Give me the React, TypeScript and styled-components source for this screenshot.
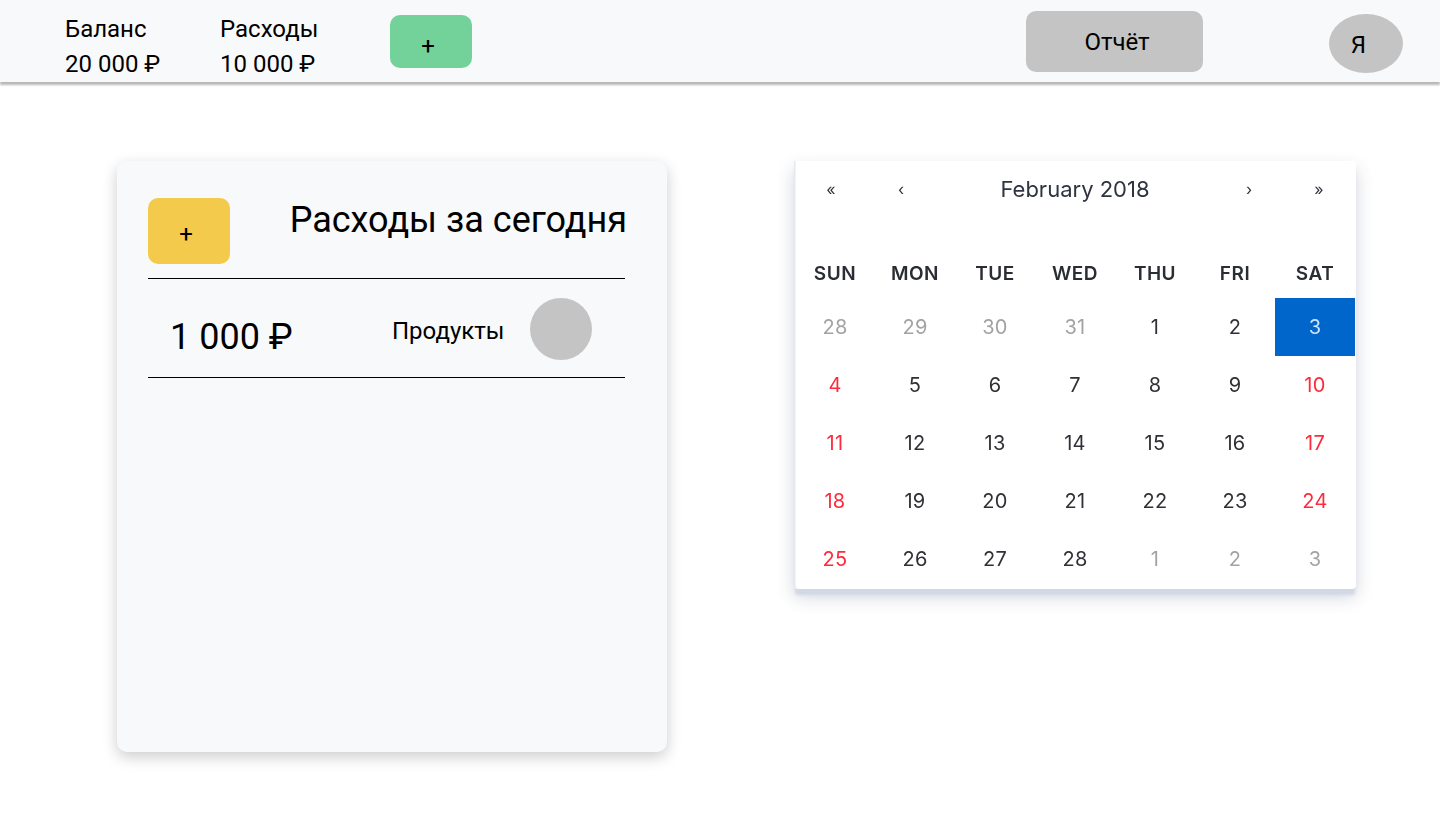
import React from 'react';
import styled, { createGlobalStyle } from 'styled-components';

const GlobalStyle = createGlobalStyle`
    html, body {
        margin: 0;
        padding: 0;
        background: #ffffff;
        font-family: Roboto, "Liberation Sans", sans-serif;
        color: #000000;
    }

    #root {
        min-height: 815px;
    }
`

type DayType = {
    value: number
    kind: 'normal' | 'muted' | 'weekend' | 'active'
}

const weekDays = ['SUN', 'MON', 'TUE', 'WED', 'THU', 'FRI', 'SAT']

const toDays = (values: number[]): DayType[] => values.map((value, i) => {
    const outside = (i < 4 && value > 20) || (i > 27 && value < 10)
    if (outside) return { value, kind: 'muted' }
    if (value === 3) return { value, kind: 'active' }
    if (i % 7 === 0 || i % 7 === 6) return { value, kind: 'weekend' }
    return { value, kind: 'normal' }
})

const days = toDays([
    28, 29, 30, 31, 1, 2, 3,
    4, 5, 6, 7, 8, 9, 10,
    11, 12, 13, 14, 15, 16, 17,
    18, 19, 20, 21, 22, 23, 24,
    25, 26, 27, 28, 1, 2, 3,
])

const Calendar = () => {
    return (
        <StyledCalendar>
            <Navigation>
                <NavButton>«</NavButton>
                <NavButton>‹</NavButton>
                <MonthLabel>February 2018</MonthLabel>
                <NavButton>›</NavButton>
                <NavButton>»</NavButton>
            </Navigation>
            <Grid>
                {weekDays.map(day => <WeekDay key={day}>{day}</WeekDay>)}
                {days.map((day, i) => <Day key={i} $kind={day.kind}>{day.value}</Day>)}
            </Grid>
        </StyledCalendar>
    );
};

export default function App() {
    return (
        <>
            <GlobalStyle/>
            <Header>
                <Stat>
                    <span>Баланс</span>
                    <span>20 000 ₽</span>
                </Stat>
                <Stat>
                    <span>Расходы</span>
                    <span>10 000 ₽</span>
                </Stat>
                <AddIncome>+</AddIncome>
                <ReportButton>Отчёт</ReportButton>
                <Avatar>Я</Avatar>
            </Header>
            <Main>
                <Card>
                    <CardHeader>
                        <AddExpense>+</AddExpense>
                        <CardTitle>Расходы за сегодня</CardTitle>
                    </CardHeader>
                    <ExpenseRow>
                        <Amount>1 000 ₽</Amount>
                        <Category>Продукты</Category>
                        <CategoryIcon/>
                    </ExpenseRow>
                </Card>
                <Calendar/>
            </Main>
        </>
    );
}

const Header = styled.header`
    display: flex;
    align-items: flex-start;
    height: 82px;
    box-sizing: border-box;
    padding-left: 65px;
    background-color: #f8f9fb;
    box-shadow: 0 3px 2px rgba(0, 0, 0, 0.28);
`

const Stat = styled.div`
    display: flex;
    flex-direction: column;
    width: 155px;
    padding-top: 12px;
    font-size: 24px;
    line-height: 35px;

    & + & {
        width: 170px;
    }
`

const AddIncome = styled.button`
    width: 82px;
    height: 53px;
    margin-top: 15px;
    padding: 8px 6px 0 0;
    border: none;
    border-radius: 10px;
    background-color: #72d29a;
    font-family: inherit;
    font-size: 24px;
    color: #000000;
`

const ReportButton = styled.button`
    width: 177px;
    height: 61px;
    margin: 11px 0 0 554px;
    padding: 0 0 0 5px;
    border: none;
    border-radius: 10px;
    background-color: #c4c4c4;
    font-family: inherit;
    font-size: 24px;
    color: #000000;
`

const Avatar = styled.div`
    display: flex;
    align-items: center;
    justify-content: center;
    box-sizing: border-box;
    width: 74px;
    height: 59px;
    margin: 14px 0 0 126px;
    padding: 3px 15px 0 0;
    border-radius: 50%;
    background-color: #c4c4c4;
    font-size: 24px;
`

const Main = styled.main`
    display: flex;
    align-items: flex-start;
    gap: 127px;
    padding: 79px 0 0 117px;
`

const Card = styled.section`
    width: 550px;
    height: 591px;
    box-sizing: border-box;
    padding: 37px 42px 0 31px;
    border-radius: 10px;
    background-color: #f8f9fb;
    box-shadow: 0 5px 15px rgba(0, 0, 0, 0.2);
`

const CardHeader = styled.div`
    display: flex;
    justify-content: space-between;
    align-items: flex-start;
    height: 80px;
    border-bottom: 1px solid #000000;
`

const AddExpense = styled.button`
    width: 82px;
    height: 66px;
    padding: 6px 6px 0 0;
    border: none;
    border-radius: 10px;
    background-color: #f4ca4d;
    font-family: inherit;
    font-size: 24px;
    color: #000000;
`

const CardTitle = styled.h2`
    margin: 1px -2px 0 0;
    font-size: 36px;
    font-weight: 400;
    line-height: 42px;
`

const ExpenseRow = styled.div`
    display: flex;
    align-items: flex-start;
    height: 99px;
    padding-top: 19px;
    box-sizing: border-box;
    border-bottom: 1px solid #000000;
`

const Amount = styled.span`
    width: 223px;
    padding: 18px 0 0 22px;
    font-size: 36px;
    line-height: 42px;
`

const Category = styled.span`
    width: 137px;
    margin-left: -1px;
    padding-top: 19px;
    font-size: 24px;
    line-height: 28px;
`

const CategoryIcon = styled.div`
    width: 62px;
    height: 62px;
    margin-left: 1px;
    border-radius: 50%;
    background-color: #c4c4c4;
`

const StyledCalendar = styled.section`
    width: 562px;
    height: 428px;
    box-sizing: border-box;
    padding-left: 1px;
    border-radius: 0 0 4px 4px;
    background-color: #ffffff;
    box-shadow:
        inset 2px 0 0 -0.5px #e6e8f0,
        0 7px 3px -1px #d3d8e6,
        0 8px 18px rgba(40, 50, 90, 0.2);
    font-family: Inter, "Open Sans", sans-serif;
    filter: blur(0.4px);
`

const Navigation = styled.div`
    display: grid;
    grid-template-columns: 70px 70px 1fr 70px 70px;
    align-items: center;
    height: 56px;
    padding: 0 2px 0 1px;
`

const NavButton = styled.span`
    text-align: center;
    font-size: 16px;
    color: #2f3440;
`

const MonthLabel = styled.span`
    text-align: center;
    font-size: 22px;
    color: #2f3440;
`

const Grid = styled.div`
    display: grid;
    grid-template-columns: repeat(7, 80px);
    grid-template-rows: 81px repeat(5, 58px);
`

const WeekDay = styled.div`
    display: flex;
    align-items: flex-end;
    justify-content: center;
    padding-bottom: 13px;
    font-size: 19px;
    font-weight: 600;
    letter-spacing: 0.5px;
    line-height: 22px;
    color: #2a2d33;
`

const dayColors = {
    normal: '#2f3136',
    muted: '#a3a3a3',
    weekend: '#ff2a3c',
    active: '#cfe3fb',
}

const Day = styled.div<{ $kind: DayType['kind'] }>`
    display: flex;
    align-items: center;
    justify-content: center;
    box-sizing: border-box;
    font-size: 20px;
    letter-spacing: 0.3px;
    color: ${props => dayColors[props.$kind]};
    background-color: ${props => props.$kind === 'active' ? '#0066cc' : 'transparent'};
`
